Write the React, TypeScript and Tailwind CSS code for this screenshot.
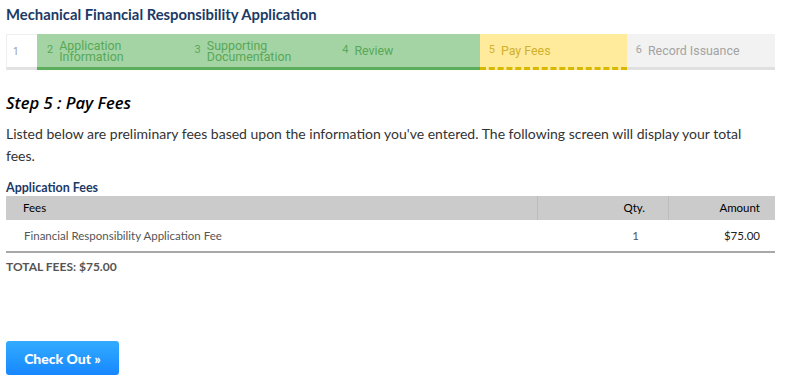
const steps = [
  { n: '2', label: ['Application', 'Information'], state: 'done' },
  { n: '3', label: ['Supporting', 'Documentation'], state: 'done' },
  { n: '4', label: ['Review'], state: 'done' },
  { n: '5', label: ['Pay Fees'], state: 'current' },
  { n: '6', label: ['Record Issuance'], state: 'todo' },
];

function StepBar() {
  return (
    <div className="flex h-[36px] w-[769px] font-['Roboto',sans-serif] text-[12.4px]">
      <div className="flex w-[31px] items-center border-t border-l border-[#eee] border-b-[3px] border-b-[#e2e2e2] bg-white pl-[6px] text-[10px] text-[#999]">
        1
      </div>
      {steps.map((s) => (
        <div
          key={s.n}
          className={
            s.state === 'done'
              ? 'flex w-[147.6px] items-center border-b-[3px] border-[#5cae5c] bg-[#a4d4a4] pl-[10px] text-[#58a858]'
              : s.state === 'current'
              ? 'flex w-[147px] items-center border-b-[3px] border-dashed border-[#d9b800] bg-[#ffeb9b] pl-[9px] text-[#d2b12a]'
              : 'flex w-[148px] items-center border-b-[3px] border-[#e0e0e0] bg-[#f2f2f2] pl-[9px] text-[#a3a3a3]'
          }
        >
          <span className="mr-[6px] text-[11px]">{s.n}</span>
          <span className="leading-[11px]">
            {s.label.map((l) => (
              <span key={l} className="block">
                {l}
              </span>
            ))}
          </span>
        </div>
      ))}
    </div>
  );
}

export default function App() {
  return (
    <div className="h-[382px] w-[786px] bg-white px-[6px] font-['Lato',sans-serif]">
      <h1 className="pt-[5px] text-[14.8px] font-bold leading-[18px] text-[#1b3a66]">
        Mechanical Financial Responsibility Application
      </h1>
      <div className="mt-[11px]">
        <StepBar />
      </div>

      <h2 className="mt-[22px] font-['Open_Sans',sans-serif] text-[16.6px] font-semibold italic leading-[22px] text-black">
        Step 5 : Pay Fees
      </h2>
      <p className="mt-[9px] w-[752px] text-[14px] leading-[22px] text-[#333]">
        Listed below are preliminary fees based upon the information you've entered. The following screen will display your total fees.
      </p>

      <div className="mt-[13px] text-[12.5px] font-bold leading-[16px] text-[#1b3a66]">Application Fees</div>
      <div className="w-[769px]">
        <div className="flex h-[24px] items-center bg-[#cbcbcb] text-[11.5px] text-black">
          <div className="flex-1 pl-[17px]">Fees</div>
          <div className="flex h-full w-[131px] items-center justify-end border-l border-[#bdbdbd] pr-[23px]">Qty.</div>
          <div className="flex h-full w-[107px] items-center justify-end border-l border-[#bdbdbd] pr-[15px]">Amount</div>
        </div>
        <div className="flex h-[33px] items-center border-b-2 border-[#a8a8a8] text-[11.5px] text-[#555]">
          <div className="flex-1 pl-[18px]">Financial Responsibility Application Fee</div>
          <div className="w-[131px] pr-[29px] text-right">1</div>
          <div className="w-[107px] pr-[15px] text-right text-[#222]">$75.00</div>
        </div>
      </div>
      <div className="mt-[6px] text-[12px] font-bold leading-[16px] text-[#555]">TOTAL FEES: $75.00</div>

      <button className="mt-[66px] flex h-[34px] w-[113px] items-center justify-center rounded-[3px] bg-gradient-to-b from-[#33abff] to-[#1787ff] text-[14px] font-black text-white">
        Check Out »
      </button>
    </div>
  );
}
